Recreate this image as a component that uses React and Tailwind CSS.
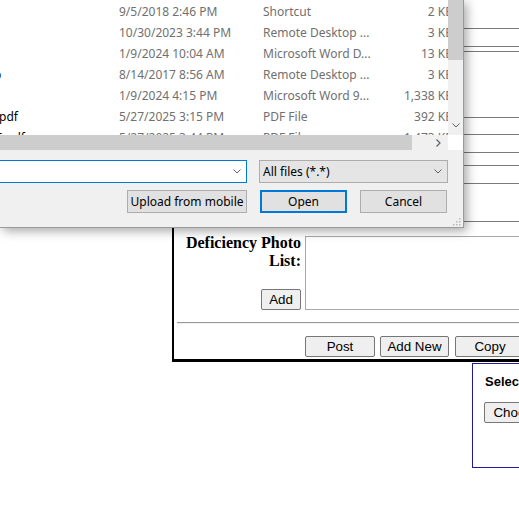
import React from "react";

const rows = [
  { name: "", date: "9/5/2018 2:46 PM", type: "Shortcut", size: "2 KB" },
  { name: "", date: "10/30/2023 3:44 PM", type: "Remote Desktop ...", size: "3 KB" },
  { name: "", date: "1/9/2024 10:04 AM", type: "Microsoft Word D...", size: "13 KB" },
  { name: "dot", date: "8/14/2017 8:56 AM", type: "Remote Desktop ...", size: "3 KB" },
  { name: "", date: "1/9/2024 4:15 PM", type: "Microsoft Word 9...", size: "1,338 KB" },
  { name: "pdf", date: "5/27/2025 3:15 PM", type: "PDF File", size: "392 KB" },
  { name: "5.pdf", date: "5/27/2025 3:44 PM", type: "PDF File", size: "1,473 KB" },
];

// page lines peeking out on the right of the dialog
const lineHeights = [29, 18, 5, 66, 17, 18, 13, 18, 38];

function Chevron({ className }) {
  return (
    <svg className={className} width="8" height="5" viewBox="0 0 8 5" fill="none">
      <path d="M0.5 0.5L4 4L7.5 0.5" stroke="#606060" strokeWidth="1" />
    </svg>
  );
}

function FileDialog() {
  return (
    <div
      className="absolute left-0 top-0 w-[464px] h-[228px] bg-[#f0f0f0] border-r border-b border-[#9a9a9a] shadow-[3px_3px_10px_rgba(0,0,0,0.35)] text-[12px] text-black"
      style={{ fontFamily: '"Noto Sans", "Open Sans", sans-serif' }}
    >
      {/* list + vertical scrollbar */}
      <div className="flex h-[135px]">
        <div className="w-[448px] overflow-hidden bg-white pt-[1px]">
          {rows.map((r, i) => (
            <div key={i} className="flex h-[21px] items-center w-[460px] whitespace-nowrap">
              <div className="w-[119px] overflow-hidden">
                {r.name === "dot" && <span className="block -ml-[6px] text-[#1b1b3a]">p</span>}
                {r.name === "pdf" && <span className="block -ml-[1px]">pdf</span>}
                {r.name === "5.pdf" && <span className="block -ml-[4px]">5.pdf</span>}
              </div>
              <div className="w-[144px] text-[#707070]">{r.date}</div>
              <div className="w-[117px] text-[#707070] overflow-hidden">{r.type}</div>
              <div className="w-[73px] text-right text-[#707070]">{r.size}</div>
            </div>
          ))}
        </div>
        <div className="w-[15px] bg-[#f0f0f0] flex flex-col">
          <div className="h-[60px] bg-[#cdcdcd]" />
          <div className="flex-1" />
          <div className="h-[16px] flex items-center justify-center mb-[2px]">
            <Chevron />
          </div>
        </div>
      </div>

      {/* horizontal scrollbar */}
      <div className="flex h-[15px]">
        <div className="w-[448px] flex bg-[#f0f0f0]">
          <div className="w-[412px] bg-[#cdcdcd]" />
          <div className="flex-1 flex items-center justify-end pr-[7px]">
            <svg width="5" height="8" viewBox="0 0 5 8" fill="none">
              <path d="M0.5 0.5L4 4L0.5 7.5" stroke="#606060" strokeWidth="1.2" />
            </svg>
          </div>
        </div>
        <div className="w-[15px] bg-white" />
      </div>

      {/* file name + filter */}
      <div className="flex mt-[10px] h-[23px]">
        <div className="w-[247px] bg-white border-y border-r border-[#0078d7] flex items-center justify-end pr-[5px]">
          <Chevron />
        </div>
        <div className="ml-[12px] w-[189px] bg-[#e5e5e5] border border-[#adadad] flex items-center justify-between pl-[3px] pr-[5px]">
          <span>All files (*.*)</span>
          <Chevron />
        </div>
      </div>

      {/* buttons */}
      <div className="flex mt-[7px] h-[23px]">
        <button className="ml-[127px] w-[120px] bg-[#e1e1e1] border border-[#adadad] flex items-center justify-center">
          Upload from mobile
        </button>
        <button className="ml-[13px] w-[87px] bg-[#e1e1e1] border-2 border-[#0078d7] flex items-center justify-center">
          Open
        </button>
        <button className="ml-[13px] w-[87px] bg-[#e1e1e1] border border-[#adadad] flex items-center justify-center">
          Cancel
        </button>
      </div>

      {/* resize grip */}
      <div className="flex justify-end pr-[2px] mt-[3px]">
        <svg width="10" height="10" viewBox="0 0 10 10">
          <rect x="8" y="2" width="1.5" height="1.5" fill="#b9b9b9" />
          <rect x="5" y="5" width="1.5" height="1.5" fill="#b9b9b9" />
          <rect x="8" y="5" width="1.5" height="1.5" fill="#b9b9b9" />
          <rect x="2" y="8" width="1.5" height="1.5" fill="#b9b9b9" />
          <rect x="5" y="8" width="1.5" height="1.5" fill="#b9b9b9" />
          <rect x="8" y="8" width="1.5" height="1.5" fill="#b9b9b9" />
        </svg>
      </div>
    </div>
  );
}

const pageBtn =
  "h-[21px] bg-[#efefef] border border-[#767676] rounded-[2px] text-[13.33px] text-black flex items-center justify-center";

export default function App() {
  return (
    <div className="relative w-[519px] h-[525px] overflow-hidden bg-white">
      {/* page underneath */}
      <div className="pl-[172px]" style={{ fontFamily: '"Liberation Sans", Arial, sans-serif' }}>
        <div className="w-[400px] border-l-2 border-b-[3px] border-black">
          <div className="flex flex-col pl-[200px]">
            {lineHeights.map((h, i) => (
              <div key={i} className="border-b border-[#7a7a7a]" style={{ height: h }} />
            ))}
          </div>

          <div className="flex items-start mt-[12px]">
            <div className="w-[127px] flex flex-col items-end">
              <div
                className="text-[16px] leading-[18px] font-bold text-right text-black"
                style={{ fontFamily: '"Liberation Serif", "Times New Roman", serif' }}
              >
                Deficiency Photo
                <br />
                List:
              </div>
              <button className={`${pageBtn} w-[40px] mt-[19px] h-[20px]`}>Add</button>
            </div>
            <div className="ml-[4px] mt-[2px] w-[260px] h-[74px] border border-[#a9a9a9] bg-white" />
          </div>

          <div className="ml-[3px] mt-[12px] border-t border-b border-t-[#9a9a9a] border-b-[#eeeeee]" />

          <div className="flex mt-[12px] ml-[131px] gap-[5px] pb-[2px]">
            <button className={`${pageBtn} w-[70px]`}>Post</button>
            <button className={`${pageBtn} w-[69px]`}>Add New</button>
            <button className={`${pageBtn} w-[70px] ml-px`}>Copy</button>
          </div>
        </div>

        <div className="ml-[300px] mt-[1px] w-[200px] h-[105px] border border-[#1c1c9c] pl-[12px] pt-[10px]">
          <div className="text-[13px] font-bold text-black leading-[16px]">Select File</div>
          <button className={`${pageBtn} w-[90px] mt-[12px] -ml-[1px] h-[20px]`}>Choose File</button>
        </div>
      </div>

      <FileDialog />
    </div>
  );
}
